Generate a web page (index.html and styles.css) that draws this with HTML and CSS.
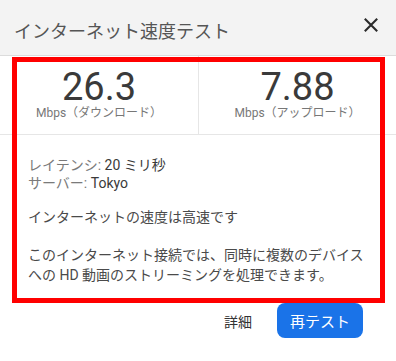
FILE: index.html
```html
<!DOCTYPE html>
<html lang="ja">
<head>
<meta charset="utf-8">
<link rel="stylesheet" href="styles.css">
</head>
<body>
<div class="card">
  <div class="header">
    <div class="title">インターネット速度テスト</div>
    <svg class="close" width="16" height="16" viewBox="0 0 16 16"><path d="M1.8 1.8 L14.2 14.2 M14.2 1.8 L1.8 14.2" stroke="#2b2b2b" stroke-width="2.1" fill="none"/></svg>
  </div>
  <div class="speeds">
    <div class="speed left">
      <div class="num">26.3</div>
      <div class="unit">Mbps（ダウンロード）</div>
    </div>
    <div class="speed">
      <div class="num">7.88</div>
      <div class="unit">Mbps（アップロード）</div>
    </div>
  </div>
  <div class="details">
    <div class="meta"><span class="key">レイテンシ:</span> 20 ミリ秒</div>
    <div class="meta"><span class="key">サーバー:</span> Tokyo</div>
    <p class="verdict">インターネットの速度は高速です</p>
    <p class="desc">このインターネット接続では、同時に複数のデバイスへの HD 動画のストリーミングを処理できます。</p>
  </div>
  <div class="footer">
    <span class="link">詳細</span>
    <span class="btn">再テスト</span>
  </div>
  <div class="mark"></div>
</div>
</body>
</html>
```
FILE: styles.css
```css
html, body {
  margin: 0;
  padding: 0;
  background: #ffffff;
}
body {
  font-family: Roboto, "Noto Sans CJK JP", sans-serif;
  width: 396px;
  height: 361px;
  overflow: hidden;
}
.card {
  position: relative;
  width: 396px;
  height: 361px;
}
.header {
  height: 55px;
  background: #f3f3f3;
  border-bottom: 1px solid #dcdcdc;
  display: flex;
  align-items: flex-start;
  padding: 0 17px 0 14px;
}
.title {
  margin-top: 18px;
  line-height: 24px;
  font-size: 18px;
  color: #555555;
  font-family: "Noto Sans CJK JP", sans-serif;
}
.close {
  margin-left: auto;
  margin-top: 17px;
}
.speeds {
  display: grid;
  grid-template-columns: 199px 1fr;
  border-bottom: 1px solid #e6e6e6;
}
.speed {
  text-align: center;
  padding: 12px 0 14px;
}
.speed.left {
  border-right: 1px solid #e6e6e6;
}
.num {
  font-size: 38px;
  line-height: 38px;
  color: #3a3a3a;
}
.unit {
  font-size: 12px;
  line-height: 14px;
  color: #777777;
}
.details {
  padding: 21px 28px 0 28px;
  font-size: 14px;
  color: #4a4a4a;
}
.meta {
  line-height: 18px;
  color: #3a3a3a;
}
.key {
  color: #7a7a7a;
}
.verdict {
  margin: 15px 0 0 0;
  line-height: 20px;
}
.desc {
  margin: 18px 0 0 0;
  line-height: 20px;
}
.footer {
  display: flex;
  justify-content: flex-end;
  align-items: center;
  gap: 25px;
  padding: 18px 33px 0 0;
}
.link {
  font-size: 14px;
  color: #333333;
}
.btn {
  width: 86px;
  height: 35px;
  border-radius: 8px;
  background: #1a73e8;
  color: #ffffff;
  font-size: 15px;
  display: flex;
  align-items: center;
  justify-content: center;
}
.mark {
  position: absolute;
  left: 12px;
  top: 57px;
  width: 373px;
  height: 246px;
  box-sizing: border-box;
  border: 5px solid #ff0000;
}
```
